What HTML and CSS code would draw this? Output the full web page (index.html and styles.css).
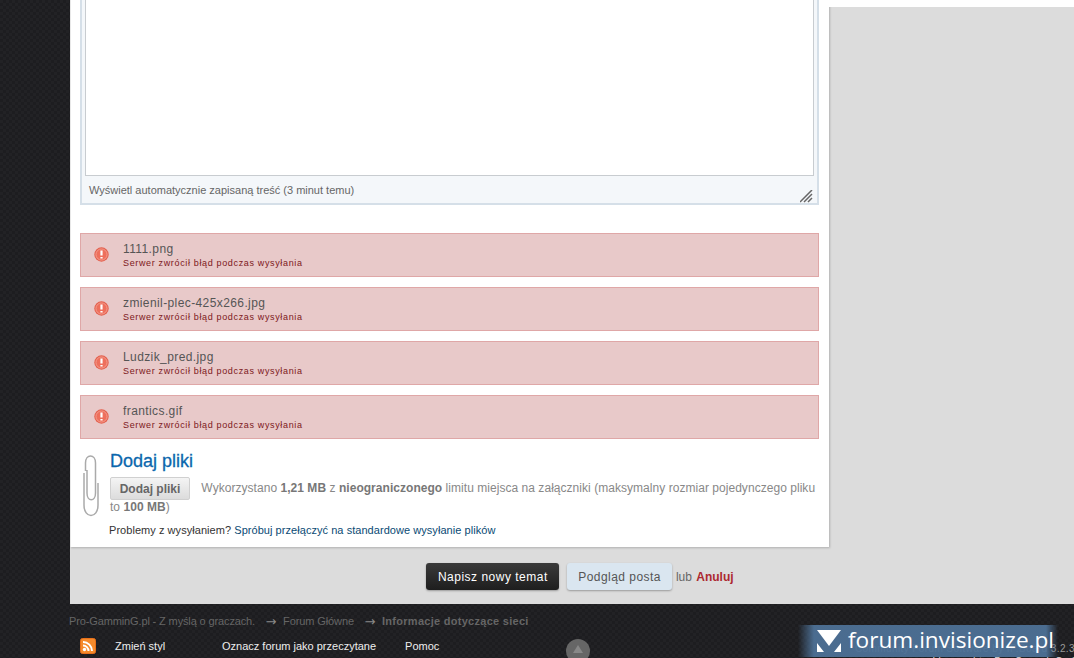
FILE: index.html
```html
<!DOCTYPE html>
<html lang="pl">

<head>
    <meta charset="UTF-8">
    <title>Pro-GamminG.pl</title>
    <link rel="stylesheet" href="styles.css">
</head>

<body>
    <div class="content">
        <div class="columns">
            <div class="panel">
                <div class="editor">
                    <div class="editor-area"></div>
                    <div class="editor-status">
                        <span>Wyświetl automatycznie zapisaną treść (3 minut temu)</span>
                        <svg class="resize-grip" width="13" height="13" viewBox="0 0 13 13">
                            <path d="M0 12L12 0M4 12L12 4M8 12L12 8" stroke="#666" stroke-width="1.5" fill="none"/>
                        </svg>
                    </div>
                </div>

                <div class="uploads">
                    <div class="upload-error">
                        <svg class="error-icon" width="15" height="15" viewBox="0 0 15 15">
                            <circle cx="7.5" cy="7.5" r="7.2" fill="#e4604e"/>
                            <circle cx="7.5" cy="7.5" r="5.6" fill="#ee6f5c" stroke="#f5a99c" stroke-width="0.8"/>
                            <path d="M7.5 3.5V8.5M7.5 10V11.5" stroke="#fff" stroke-width="2.2" fill="none"/>
                        </svg>
                        <div>
                            <div class="file-name">1111.png</div>
                            <div class="file-error">Serwer zwrócił błąd podczas wysyłania</div>
                        </div>
                    </div>
                    <div class="upload-error">
                        <svg class="error-icon" width="15" height="15" viewBox="0 0 15 15">
                            <circle cx="7.5" cy="7.5" r="7.2" fill="#e4604e"/>
                            <circle cx="7.5" cy="7.5" r="5.6" fill="#ee6f5c" stroke="#f5a99c" stroke-width="0.8"/>
                            <path d="M7.5 3.5V8.5M7.5 10V11.5" stroke="#fff" stroke-width="2.2" fill="none"/>
                        </svg>
                        <div>
                            <div class="file-name">zmienil-plec-425x266.jpg</div>
                            <div class="file-error">Serwer zwrócił błąd podczas wysyłania</div>
                        </div>
                    </div>
                    <div class="upload-error">
                        <svg class="error-icon" width="15" height="15" viewBox="0 0 15 15">
                            <circle cx="7.5" cy="7.5" r="7.2" fill="#e4604e"/>
                            <circle cx="7.5" cy="7.5" r="5.6" fill="#ee6f5c" stroke="#f5a99c" stroke-width="0.8"/>
                            <path d="M7.5 3.5V8.5M7.5 10V11.5" stroke="#fff" stroke-width="2.2" fill="none"/>
                        </svg>
                        <div>
                            <div class="file-name">Ludzik_pred.jpg</div>
                            <div class="file-error">Serwer zwrócił błąd podczas wysyłania</div>
                        </div>
                    </div>
                    <div class="upload-error">
                        <svg class="error-icon" width="15" height="15" viewBox="0 0 15 15">
                            <circle cx="7.5" cy="7.5" r="7.2" fill="#e4604e"/>
                            <circle cx="7.5" cy="7.5" r="5.6" fill="#ee6f5c" stroke="#f5a99c" stroke-width="0.8"/>
                            <path d="M7.5 3.5V8.5M7.5 10V11.5" stroke="#fff" stroke-width="2.2" fill="none"/>
                        </svg>
                        <div>
                            <div class="file-name">frantics.gif</div>
                            <div class="file-error">Serwer zwrócił błąd podczas wysyłania</div>
                        </div>
                    </div>
                </div>

                <div class="attach">
                    <svg class="clip" width="17" height="62" viewBox="0 0 17 62">
                        <path d="M15 28V50C15 64 1 64 1 50V18M4 15V38C4 47 12.5 47 12.5 38V8C12.500 -1.500 2.500 -1.500 2.500 8V16" stroke="#aaa" stroke-width="1.5" fill="none"/>
                    </svg>
                    <div class="attach-body">
                        <h3 class="attach-title">Dodaj pliki</h3>
                        <div class="attach-info">
                            <button class="button-add">Dodaj pliki</button>
                            Wykorzystano <strong>1,21 MB</strong> z <strong>nieograniczonego</strong> limitu miejsca na załączniki (maksymalny rozmiar pojedynczego pliku to <strong>100 MB</strong>)
                        </div>
                        <p class="attach-help">Problemy z wysyłaniem? <a href="#">Spróbuj przełączyć na standardowe wysyłanie plików</a></p>
                    </div>
                </div>
            </div>
            <div class="side">
                <div class="side-strip"></div>
            </div>
        </div>

        <div class="actions">
            <button class="button button-dark">Napisz nowy temat</button>
            <button class="button button-light">Podgląd posta</button>
            <span class="or">lub <a href="#" class="cancel">Anuluj</a></span>
        </div>
    </div>

    <div class="footer">
        <div class="breadcrumb">
            <span class="crumb-first">Pro-GamminG.pl - Z myślą o graczach.</span>
            <span class="arrow">→</span>
            <span class="crumb-mid">Forum Główne</span>
            <span class="arrow">→</span>
            <strong class="crumb-last">Informacje dotyczące sieci</strong>
        </div>
        <div class="footer-links">
            <svg class="rss" width="16" height="16" viewBox="0 0 16 16">
                <rect x="0.500" y="0.500" width="15" height="15" rx="2" fill="#f58a2b" stroke="#e8701a"/>
                <circle cx="4.500" cy="11.500" r="1.700" fill="#fff"/>
                <path d="M3 7.500A5.500 5.500 0 0 1 8.500 13M3 4A9 9 0 0 1 12 13" stroke="#fff" stroke-width="2" fill="none"/>
            </svg>
            <a href="#" class="link-style">Zmień styl</a>
            <a href="#" class="link-read">Oznacz forum jako przeczytane</a>
            <a href="#">Pomoc</a>
        </div>
        <div class="to-top"></div>
        <div class="copyright">
            <div>Community Forum Software by IP.Board 3.2.3</div>
            <div class="licence">Licensed to: Pro-GamminG.pl</div>
        </div>
        <div class="watermark">
            <svg class="watermark-logo" width="24" height="22" viewBox="0 0 24 22">
                <path d="M0 0H24L12 16ZM0 13L7 22H0ZM24 13V22H17Z" fill="#fff"/>
            </svg>
            <span class="watermark-text">forum.invisionize.pl</span>
        </div>
    </div>
</body>

</html>
```

FILE: styles.css
```css
html,
body {
    margin: 0;
    padding: 0;
    height: 100%;
    overflow: hidden;
}

body {
    font-family: "Liberation Sans", Arial, sans-serif;
    font-size: 11px;
    color: #666;
    background-color: #222225;
    background-image:
        linear-gradient(45deg, #1d1d20 25%, transparent 25%, transparent 75%, #1d1d20 75%),
        linear-gradient(45deg, #1d1d20 25%, transparent 25%, transparent 75%, #1d1d20 75%);
    background-size: 6px 6px;
    background-position: 0 0, 3px 3px;
}

a {
    text-decoration: none;
}

.content {
    margin-left: 70px;
    height: 604px;
    background-color: #dcdcdc;
}

.columns {
    display: flex;
}

.panel {
    box-sizing: border-box;
    width: 759px;
    height: 547px;
    padding: 0 10px 0 9px;
    background-color: #fff;
    border-left: 1px solid #e8e8e8;
    box-shadow: 1px 1px 2px rgba(0, 0, 0, 0.2);
}

.side {
    flex: 1;
}

.side-strip {
    height: 7px;
    background-color: #fff;
}

.editor {
    height: 205px;
    box-sizing: border-box;
    padding: 0 3px;
    background-color: #f4f7fa;
    border: 2px solid #d5dfe8;
    border-top: 0;
}

.editor-area {
    height: 176px;
    box-sizing: border-box;
    background-color: #fff;
    border: 1px solid #c8ccd0;
    border-top: 0;
}

.editor-status {
    display: flex;
    justify-content: space-between;
    align-items: flex-end;
    height: 27px;
    padding: 0 1px 1px 4px;
    font-size: 11px;
    color: #666;
}

.editor-status span {
    align-self: center;
}

.uploads {
    display: flex;
    flex-direction: column;
    gap: 10px;
    margin-top: 28px;
}

.upload-error {
    display: flex;
    align-items: center;
    box-sizing: border-box;
    height: 44px;
    padding-left: 13px;
    background-color: #e8c9c9;
    border: 1px solid #dfa7a7;
}

.error-icon {
    flex: none;
    margin: 0 14px 2px 0;
}

.file-name {
    font-size: 12px;
    line-height: 14px;
    color: #555;
    letter-spacing: 0.4px;
    margin-bottom: 2px;
}

.file-error {
    font-size: 9px;
    line-height: 11px;
    color: #7d1820;
    letter-spacing: 0.65px;
}

.attach {
    display: flex;
    margin-top: 11px;
}

.clip {
    flex: none;
    margin: 5px 10px 0 3px;
    overflow: visible;
}

.attach-title {
    margin: 0;
    font-size: 18px;
    line-height: 22px;
    font-weight: normal;
    color: #0b67ad;
    -webkit-text-stroke: 0.3px #0b67ad;
}

.attach-info {
    margin-top: 7px;
    font-size: 12px;
    line-height: 19px;
    letter-spacing: 0.04px;
    color: #888;
}

.attach-info strong {
    color: #777;
}

.button-add {
    height: 23px;
    width: 80px;
    margin: -3px 8px -3px 0;
    padding: 0;
    vertical-align: middle;
    font: bold 12px "Liberation Sans", Arial, sans-serif;
    color: #666;
    background: linear-gradient(#f4f4f4, #dcdcdc);
    border: 1px solid #d0d0d0;
    border-radius: 2px;
}

.attach-help {
    margin: 7px 0 0 -1px;
    font-size: 11px;
    letter-spacing: 0.05px;
    color: #333;
}

.attach-help a {
    color: #0a4a74;
}

.actions {
    display: flex;
    align-items: center;
    justify-content: center;
    gap: 8px;
    margin-top: 16px;
    padding-left: 16px;
    font-size: 12px;
}

.button {
    height: 27px;
    padding: 0 11.5px;
    font: 12px "Liberation Sans", Arial, sans-serif;
    letter-spacing: 0.5px;
    border-radius: 3px;
    border: 0;
    box-shadow: 0 1px 2px rgba(0, 0, 0, 0.3);
}

.button-dark {
    color: #fff;
    background: linear-gradient(#3a3a3a, #1e1e1e);
}

.button-light {
    padding: 0 11px 0 11px;
    letter-spacing: 0.45px;
    color: #555;
    background-color: #dae6f0;
}

.or {
    margin-left: -4px;
    color: #666;
}

.cancel {
    margin-left: 1px;
    font-weight: bold;
    color: #ad2930;
}

.footer {
    position: relative;
    height: 54px;
    padding-left: 70px;
}

.breadcrumb {
    display: flex;
    padding-top: 11px;
    font-size: 11px;
    line-height: 13px;
    color: #666;
}

.crumb-first {
    margin-left: -1px;
    letter-spacing: -0.13px;
}

.crumb-mid {
    letter-spacing: -0.1px;
}

.crumb-last {
    letter-spacing: 0.28px;
}

.arrow {
    width: 12px;
    margin: 0 6px 0 10px;
    text-align: center;
    font-family: "DejaVu Sans", sans-serif;
    font-size: 13px;
    color: #888;
}

.footer-links {
    display: flex;
    align-items: center;
    margin-top: 10px;
    padding-left: 10px;
    color: #fff;
}

.footer-links a {
    font-size: 11px;
    color: #eee;
}

.rss {
    margin-right: 19px;
}

.link-style {
    width: 107px;
}

.link-read {
    margin-right: 29px;
}

/* these sit over the footer */
.to-top {
    position: absolute;
    left: 566px;
    top: 35px;
    width: 24px;
    height: 24px;
    border-radius: 50%;
    background-color: #666;
}

.to-top::after {
    content: "";
    position: absolute;
    left: 7px;
    top: 6px;
    border-left: 5px solid transparent;
    border-right: 5px solid transparent;
    border-bottom: 8px solid #888;
}

.copyright {
    position: absolute;
    right: -1px;
    top: 38px;
    font-size: 10px;
    line-height: 13px;
    letter-spacing: 0.4px;
    text-align: right;
    color: #999;
}

.licence {
    color: #ddd;
}

.watermark {
    position: absolute;
    left: 798px;
    top: 21px;
    display: flex;
    align-items: center;
    gap: 7px;
    box-sizing: border-box;
    width: 260px;
    height: 32px;
    padding-left: 19px;
    background: linear-gradient(90deg, rgba(78, 114, 152, 0) 0, rgba(78, 114, 152, 0.93) 16px, rgba(78, 114, 152, 0.93) 248px, rgba(78, 114, 152, 0) 100%);
    color: #fff;
    font-family: "Open Sans", sans-serif;
    font-size: 22.6px;
    white-space: nowrap;
}

.watermark-logo {
    flex: none;
}

.watermark-text {
    margin-top: -3px;
}
```
